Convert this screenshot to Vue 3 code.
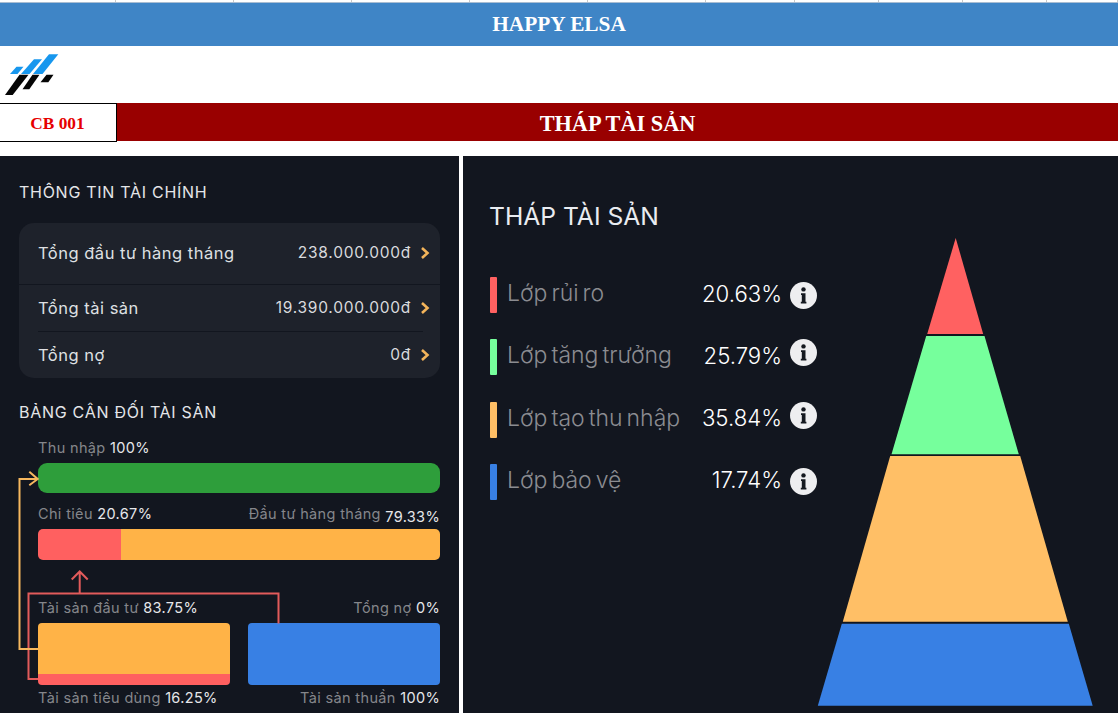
<script setup>
const ticks = [116, 118, 118, 118, 118, 118, 89, 84, 84, 84, 71]
const money = [
  { label: 'Tổng đầu tư hàng tháng', value: '238.000.000đ', cls: 'r1' },
  { label: 'Tổng tài sản', value: '19.390.000.000đ', cls: 'r2' },
  { label: 'Tổng nợ', value: '0đ', cls: 'r3' },
]
const layers = [
  { label: 'Lớp rủi ro', pct: '20.63%', cls: 'c-red', raised: false },
  { label: 'Lớp tăng trưởng', pct: '25.79%', cls: 'c-green', raised: true },
  { label: 'Lớp tạo thu nhập', pct: '35.84%', cls: 'c-orange', raised: true },
  { label: 'Lớp bảo vệ', pct: '17.74%', cls: 'c-blue', raised: false },
]
</script>

<template>
  <div class="page">
    <div class="ruler">
      <i v-for="(w, n) in ticks" :key="n" class="tick" :style="{ width: w + 'px' }"></i>
    </div>
    <header class="brand">HAPPY ELSA</header>
    <div class="logo-row">
      <svg class="logo" width="60" height="50" viewBox="0 0 60 50">
        <g fill="#1797ee">
          <polygon points="58.3,8.3 49,8.3 33,28 42.5,28" />
          <polygon points="42,13.3 34,13.3 21,28 29.5,28" />
          <polygon points="23.5,20.7 16.5,20.7 10,28 17.5,28" />
        </g>
        <g fill="#050505">
          <polygon points="19.5,28.7 28.5,28.7 12.7,49 5,49" />
          <polygon points="32.5,28.7 39.5,28.7 29.3,43.3 22.5,43.3" />
          <polygon points="46.5,28.7 53.5,28.7 48.3,36.3 40.5,36.3" />
        </g>
      </svg>
    </div>
    <div class="title-row">
      <div class="code">CB 001</div>
      <div class="title">THÁP TÀI SẢN</div>
    </div>
    <div class="panels">
      <section class="left">
        <h2 class="head first">THÔNG TIN TÀI CHÍNH</h2>
        <div class="card">
          <div v-for="m in money" :key="m.label" class="money" :class="m.cls">
            <span>{{ m.label }}</span>
            <span class="amount">{{ m.value }}</span>
            <svg class="chev" width="10" height="14" viewBox="0 0 10 14">
              <path d="M2 2 L7.5 7 L2 12" fill="none" stroke="#f3b45a" stroke-width="2.6" />
            </svg>
          </div>
        </div>
        <h2 class="head second">BẢNG CÂN ĐỐI TÀI SẢN</h2>

        <div class="lab l1"><span>Thu nhập <b>100%</b></span></div>
        <div class="bar green"></div>
        <div class="lab l2">
          <span>Chi tiêu <b>20.67%</b></span>
          <span>Đầu tư hàng tháng <b class="low">79.33%</b></span>
        </div>
        <div class="bar split"><i class="seg-red"></i><i class="seg-orange"></i></div>
        <div class="lab l3">
          <span>Tài sản đầu tư <b>83.75%</b></span>
          <span>Tổng nợ <b>0%</b></span>
        </div>
        <div class="blocks">
          <div class="block stack"><i class="seg-orange"></i><i class="seg-foot"></i></div>
          <div class="block solid"></div>
        </div>
        <div class="lab l4">
          <span>Tài sản tiêu dùng <b>16.25%</b></span>
          <span>Tài sản thuần <b>100%</b></span>
        </div>

        <svg class="links" width="459" height="557" viewBox="0 0 459 557">
          <path d="M38 523 H28.5 V437.5 H278.5 V467.5" fill="none" stroke="#e25b5b" stroke-width="2" />
          <path d="M79.7 437.5 V416 M71.7 423.5 L79.7 415.5 L87.7 423.5" fill="none" stroke="#e25b5b" stroke-width="2" />
          <path d="M38 493 H19.5 V323 H37" fill="none" stroke="#f6b75e" stroke-width="2" />
          <path d="M29.3 315.7 L37.7 323 L29.3 329.3" fill="none" stroke="#f6b75e" stroke-width="2" />
        </svg>
      </section>

      <section class="right">
        <div class="legend">
          <h1 class="tower-title">THÁP TÀI SẢN</h1>
          <div v-for="l in layers" :key="l.label" class="layer">
            <i class="swatch" :class="l.cls"></i>
            <span class="name">{{ l.label }}</span>
            <span class="pct">{{ l.pct }}</span>
            <svg class="info" :class="{ raised: l.raised }" width="27" height="27" viewBox="0 0 27 27">
              <circle cx="13.5" cy="13.5" r="13.5" fill="#eeeef0" />
              <circle cx="13.5" cy="7.4" r="2.2" fill="#14181f" />
              <path d="M11 11.2 H15.5 V19.8 H16.4 V21.6 H10.8 V19.8 H11.8 V13 H11 Z" fill="#14181f" />
            </svg>
          </div>
        </div>
        <svg class="pyramid" width="275" height="468" viewBox="0 0 275 468">
          <polygon points="137.7,0 165.2,96 109.2,96" fill="#ff6161" />
          <polygon points="108.2,98 166.5,98 200.8,216.3 73.5,216.3" fill="#76ff9c" />
          <polygon points="72.2,218 202.2,218 249.8,383.7 24.8,383.7" fill="#ffbf66" />
          <polygon points="23.8,385.7 250.8,385.7 274.7,467.7 -0.2,467.7" fill="#3880e4" />
        </svg>
      </section>
    </div>
  </div>
</template>

<style scoped>
.page {
  width: 1118px;
  height: 713px;
  overflow: hidden;
  background: #fff;
  font-family: Inter, "Noto Sans", sans-serif;
}
.ruler {
  display: flex;
  height: 3px;
  box-sizing: border-box;
  border-bottom: 1px solid #a9bdd2;
}
.tick {
  display: block;
  flex: none;
  box-sizing: border-box;
  border-right: 1px solid #c8c8c8;
}
.brand {
  height: 43px;
  background: #3f85c6;
  color: #fff;
  text-align: center;
  font: bold 21.33px/42px "Liberation Serif", serif;
}
.logo-row {
  height: 57px;
}
.logo {
  display: block;
}
.title-row {
  display: flex;
  height: 38px;
  font-family: "Liberation Serif", serif;
  font-weight: bold;
}
.code {
  box-sizing: border-box;
  width: 117px;
  height: 39px;
  border: 1px solid #000;
  border-left: 0;
  color: #e60000;
  font-size: 17.33px;
  line-height: 39px;
  text-align: center;
  padding-right: 1px;
}
.title {
  flex: 1;
  background: #990000;
  color: #fff;
  font-size: 22.3px;
  line-height: 41px;
  text-align: center;
}
.panels {
  display: flex;
  gap: 4px;
  margin-top: 15px;
  height: 557px;
}
.left,
.right {
  background: #12161f;
  height: 557px;
  box-sizing: border-box;
}
.left {
  position: relative;
  width: 459px;
  padding-left: 19px;
  padding-right: 19px;
}
.head {
  margin: 0;
  font-weight: 400;
  font-size: 16px;
  letter-spacing: 0.72px;
  line-height: 20px;
  color: #e4e5e8;
  white-space: nowrap;
}
.head.first {
  padding-top: 26px;
}
.head.second {
  margin-top: 24px;
}
.card {
  margin-top: 21px;
  height: 155px;
  background: #1e222b;
  border-radius: 15px;
  overflow: hidden;
}
.money {
  display: flex;
  align-items: center;
  padding: 0 10px 0 19px;
  box-sizing: border-box;
  color: #dfe0e3;
  font-size: 16.5px;
  letter-spacing: 0.5px;
}
.money .amount {
  margin-left: auto;
  font-size: 15.5px;
  letter-spacing: 0.75px;
  color: #d9dade;
}
.chev {
  margin-left: 9px;
}
.r1 {
  height: 62px;
  padding-bottom: 2px;
  border-bottom: 1px solid #12161f;
}
.r2 {
  height: 47px;
  position: relative;
  padding-bottom: 2px;
}
.r2::after {
  content: "";
  position: absolute;
  left: 19px;
  right: 17px;
  bottom: 0;
  border-bottom: 1px solid #12161f;
}
.r3 {
  height: 46px;
  padding-bottom: 1px;
}
.lab {
  display: flex;
  justify-content: space-between;
  height: 18px;
  margin-left: 19px;
  font-size: 14.5px;
  letter-spacing: 0.35px;
  line-height: 18px;
  color: #85868b;
  white-space: nowrap;
}
.lab b {
  font-weight: 400;
  color: #e6e7ea;
}
.lab .low {
  vertical-align: -3px;
}
.l1 {
  margin-top: 17px;
}
.l2 {
  margin-top: 12px;
}
.l3 {
  margin-top: 39px;
}
.l4 {
  margin-top: 4px;
}
.bar {
  margin: 6px 0 0 19px;
  height: 31px;
  overflow: hidden;
}
.green {
  height: 30px;
  background: #2e9e3b;
  border-radius: 9px;
}
.split {
  display: flex;
  border-radius: 5px;
}
.split i,
.stack i {
  display: block;
}
.seg-red {
  width: 83px;
  background: #ff6060;
}
.split .seg-orange {
  flex: 1;
}
.seg-orange {
  background: #ffb347;
}
.blocks {
  display: flex;
  gap: 18.5px;
  margin: 6px 0 0 19px;
  height: 62px;
}
.block {
  flex: 1;
  border-radius: 4px;
  overflow: hidden;
}
.stack {
  display: flex;
  flex-direction: column;
}
.stack .seg-orange {
  flex: 1;
}
.seg-foot {
  height: 11px;
  background: #ff6060;
}
.solid {
  background: #3880e4;
}
.links {
  position: absolute;
  left: 0;
  top: 0;
  pointer-events: none;
}
.right {
  flex: 1;
  display: flex;
  align-items: flex-start;
  padding-left: 27px;
}
.legend {
  width: 327px;
}
.tower-title {
  margin: 0 0 45px -1px;
  padding-top: 44px;
  font-weight: 400;
  font-size: 24.7px;
  line-height: 32px;
  color: #e9ecf1;
  white-space: nowrap;
}
.layer {
  display: flex;
  align-items: center;
  height: 36px;
  margin-bottom: 26.33px;
}
.swatch {
  width: 7px;
  height: 36px;
  border-radius: 1px;
  flex: none;
}
.c-red { background: #ff6161; }
.c-green { background: #76ff9c; }
.c-orange { background: #ffbf66; }
.c-blue { background: #3880e4; }
.name {
  margin: 0 0 4px 10px;
  font-size: 23px;
  font-weight: 300;
  word-spacing: -2.5px;
  color: #8b8c91;
  white-space: nowrap;
}
.pct {
  margin: 0 0 4px auto;
  font-size: 22.2px;
  font-weight: 300;
  color: #fff;
}
.info {
  flex: none;
  margin-left: 8px;
}
.info.raised {
  margin-bottom: 9px;
}
.pyramid {
  flex: none;
  margin: 82px 0 0 1px;
  overflow: visible;
}
</style>

<style>
html, body { margin: 0; background: #fff; }
</style>
